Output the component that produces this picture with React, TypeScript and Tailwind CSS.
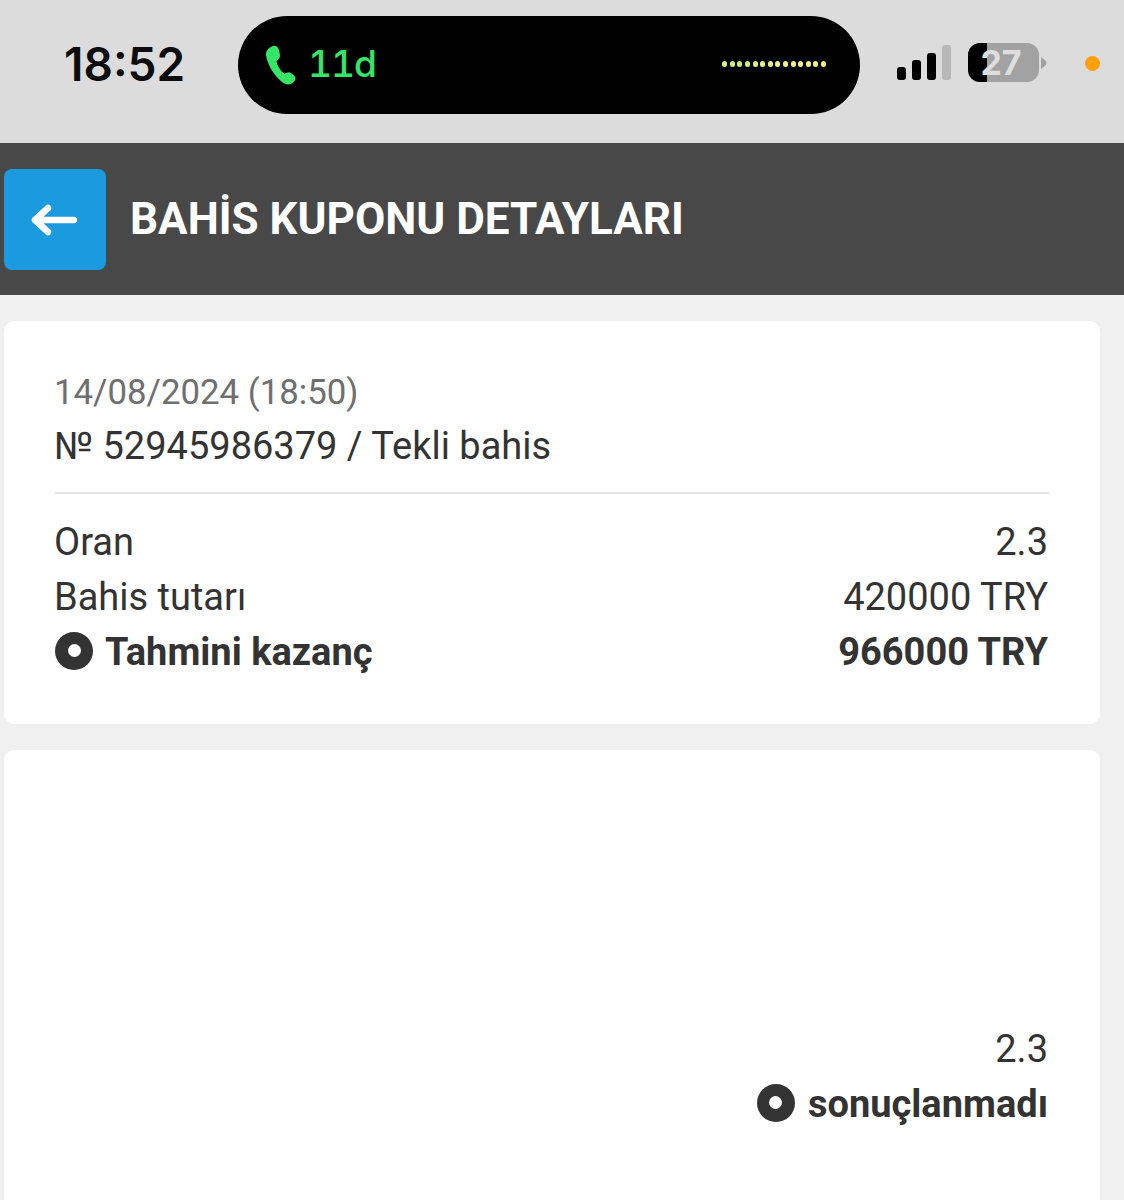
const dots = ["#d9f58a","#c8f27a","#c0f070","#d0f37e","#dcf585","#e4f585","#e8f585","#eef588","#f0f58a","#f2f58a","#f4f58a","#f4f58a","#f4f58a","#f4f58a"];

function Ring() {
  return (
    <span className="flex h-[38px] w-[38px] shrink-0 -translate-y-[2px] items-center justify-center rounded-full bg-[#333333]">
      <span className="h-[13px] w-[13px] rounded-full bg-white" />
    </span>
  );
}

export default function App() {
  return (
    <div className="h-[1200px] w-[1124px] overflow-hidden bg-[#f0f0f0] font-['Roboto',sans-serif] text-[#333333]">
      <div className="flex h-[143px] items-start bg-[#dcdcdc]">
        <div className="ml-[64px] mt-[35px] w-[174px] font-['Inter',sans-serif] text-[46px] leading-[58px] font-semibold text-[#0c0c0c]">18:52</div>
        <div className="mt-[16px] flex h-[98px] w-[622px] items-center rounded-[49px] bg-black pl-[26px] pr-[34px]">
          <svg width="34" height="42" viewBox="0 0 34 42" className="shrink-0">
            <path d="M9 2 C12 1 14 3 15 6 L16 11 C16.500 14 14 15.500 12.500 17 C13 22 17 27 20.500 30 C22.500 28.500 24.500 27.500 27 29 L30 31.500 C32 33.500 32 35.500 30 37.500 C27 41 22 41.500 18 38 C10 31.500 3 20 2 11 C1.700 7 4.500 3.500 9 2 Z" fill="#34e567" />
          </svg>
          <span className="ml-[10px] -translate-y-[2px] font-['Inter',sans-serif] text-[37px] leading-none font-medium tabular-nums tracking-[-1px] text-[#34e567]">11d</span>
          <div className="ml-auto flex -translate-y-[1px] items-center gap-[2.600px]">
            {dots.map((c, i) => (
              <span key={i} className="h-[6px] w-[5px] rounded-full" style={{ backgroundColor: c }} />
            ))}
          </div>
        </div>
        <div className="ml-[37px] mt-[45px] flex h-[35px] items-end gap-[6px]">
          <span className="h-[13px] w-[9px] rounded-[3px] bg-black" />
          <span className="h-[20px] w-[9px] rounded-[3px] bg-black" />
          <span className="h-[27px] w-[9px] rounded-[3px] bg-black" />
          <span className="h-[35px] w-[9px] rounded-[3px] bg-[#b8b8b8]" />
        </div>
        <div className="relative ml-[17px] mt-[43px] h-[39px] w-[71px] overflow-hidden rounded-[12px] bg-[#a2a2a2]">
          <div className="h-full w-[19px] bg-black" />
          <span className="absolute inset-0 flex items-center justify-center pr-[5px] font-['Inter',sans-serif] text-[34px] leading-none font-bold text-[#dedede]">27</span>
        </div>
        <svg width="6" height="12" viewBox="0 0 6 12" className="ml-[2px] mt-[57px]">
          <path d="M0 0 L5 4 Q6 6 5 8 L0 12 Z" fill="#a2a2a2" />
        </svg>
        <div className="ml-[38px] mt-[56px] h-[15px] w-[15px] rounded-full bg-[#ff9f0a]" />
      </div>

      <div className="flex h-[152px] items-center bg-[#484848] pl-[4px]">
        <div className="flex h-[101px] w-[102px] items-center justify-center rounded-[8px] bg-[#1b9ae0]">
          <svg width="46" height="34" viewBox="0 0 46 34" fill="none" stroke="white" strokeWidth="6.500" strokeLinecap="round" strokeLinejoin="round" className="mt-[2px] mr-[3px]">
            <path d="M43 17 H4 M17 5 L4 17 L17 29" />
          </svg>
        </div>
        <h1 className="ml-[24px] text-[44px] leading-none font-bold text-white">BAHİS KUPONU DETAYLARI</h1>
      </div>

      <div className="mt-[26px] ml-[4px] h-[403px] w-[1096px] rounded-[10px] bg-white px-[51px] pt-[44px]">
        <div className="-ml-[1px] text-[34.800px] leading-[54px] text-[#6f6f6f]">14/08/2024 (18:50)</div>
        <div className="-ml-[1px] text-[38px] leading-[54px]">№ 52945986379 / Tekli bahis</div>
        <div className="mt-[19px] h-[2px] bg-[#e4e4e4]" />
        <div className="mt-[21px] -ml-[1px] mr-[1px] flex justify-between text-[38px] leading-[55px]">
          <span>Oran</span>
          <span>2.3</span>
        </div>
        <div className="-ml-[1px] mr-[1px] flex justify-between text-[38px] leading-[55px]">
          <span>Bahis tutarı</span>
          <span>420000 TRY</span>
        </div>
        <div className="mr-[1px] flex items-center justify-between text-[38px] leading-[55px] font-bold">
          <span className="flex items-center gap-[12px]"><Ring />Tahmini kazanç</span>
          <span>966000 TRY</span>
        </div>
      </div>

      <div className="mt-[26px] ml-[4px] h-[470px] w-[1096px] rounded-[10px] bg-white px-[51px] pt-[272px]">
        <div className="mr-[1px] text-right text-[38px] leading-[55px]">2.3</div>
        <div className="mr-[1px] flex items-center justify-end gap-[13px] text-[38px] leading-[55px] font-bold">
          <Ring />
          <span>sonuçlanmadı</span>
        </div>
      </div>
    </div>
  );
}
